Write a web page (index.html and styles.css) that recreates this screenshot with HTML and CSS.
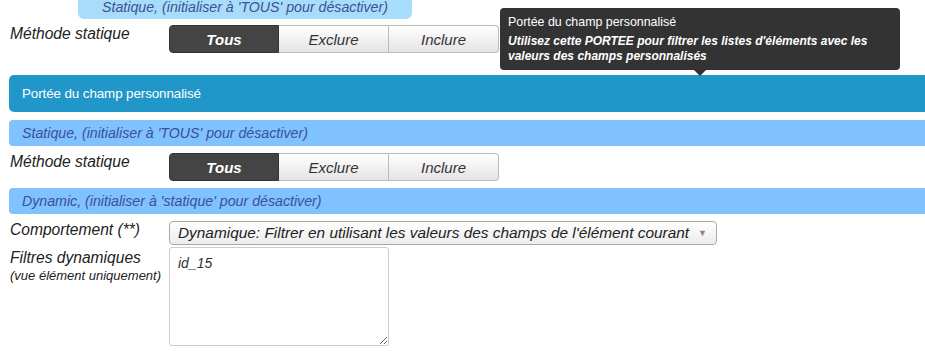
FILE: index.html
```html
<!DOCTYPE html>
<html lang="fr">
  <head>
    <meta charset="UTF-8" />
    <meta name="viewport" content="width=device-width, initial-scale=1.0" />
    <title>Portée du champ personnalisé</title>
    <link rel="stylesheet" href="styles.css">
  </head>

  <body>
    <div class="haut">Statique, (initialiser à 'TOUS' pour désactiver)</div>

    <div class="ligne ligne-boutons">
      <label class="etiquette">Méthode statique</label>
      <div class="groupe">
        <button class="actif">Tous</button>
        <button>Exclure</button>
        <button>Inclure</button>
      </div>
    </div>

    <div class="infobulle">
      <div class="infobulle-titre">Portée du champ personnalisé</div>
      <div class="infobulle-texte">Utilisez cette PORTEE pour filtrer les listes d'éléments avec les valeurs des champs personnalisés</div>
    </div>

    <div class="titre">Portée du champ personnalisé</div>

    <div class="section">Statique, (initialiser à 'TOUS' pour désactiver)</div>

    <div class="ligne ligne-boutons">
      <label class="etiquette">Méthode statique</label>
      <div class="groupe">
        <button class="actif">Tous</button>
        <button>Exclure</button>
        <button>Inclure</button>
      </div>
    </div>

    <div class="section">Dynamic, (initialiser à 'statique' pour désactiver)</div>

    <div class="ligne ligne-select">
      <label class="etiquette">Comportement (**)</label>
      <div class="choix">
        <span>Dynamique: Filtrer en utilisant les valeurs des champs de l'élément courant</span>
        <span class="fleche">▼</span>
      </div>
    </div>

    <div class="ligne ligne-filtres">
      <label class="etiquette">Filtres dynamiques<small>(vue élément uniquement)</small></label>
      <textarea>id_15</textarea>
    </div>
  </body>
</html>
```

FILE: styles.css
```css
html {
  overflow: hidden;
}
body {
  margin: 0;
  font-family: "Liberation Sans", Arial, sans-serif;
  color: #222;
  position: relative;
}
.haut {
  margin-left: 78px;
  width: 334px;
  height: 19px;
  line-height: 14.5px;
  background-color: #a8dcfb;
  border-radius: 0 0 6px 6px;
  text-align: center;
  font-size: 14.2px;
  font-style: italic;
  color: #3d5291;
  white-space: nowrap;
}
.ligne {
  display: flex;
  padding-left: 10px;
}
.etiquette {
  width: 159px;
  flex-shrink: 0;
  font-size: 15.6px;
  font-style: italic;
  line-height: 18px;
  white-space: nowrap;
}
.etiquette small {
  display: block;
  font-size: 13px;
  line-height: 16px;
  margin-top: 1px;
}
.ligne-boutons {
  margin-top: 6px;
}
.groupe {
  display: flex;
}
.groupe button {
  width: 110px;
  height: 28px;
  margin: 0;
  font-family: "Liberation Sans", Arial, sans-serif;
  font-size: 15px;
  font-style: italic;
  color: #333;
  background: linear-gradient(#ffffff, #e4e4e4);
  border: 1px solid #bbb;
  border-left: none;
  padding: 0;
}
.groupe button:first-child {
  border-radius: 4px 0 0 4px;
  border-left: 1px solid #333;
}
.groupe button:last-child {
  border-radius: 0 4px 4px 0;
}
.groupe button.actif {
  background: #444;
  border-color: #333;
  color: #fff;
  font-weight: bold;
}
.titre {
  margin: 22px 0 0 9px;
  height: 37px;
  line-height: 37px;
  padding-left: 13px;
  background-color: #2197c9;
  border-radius: 5px 0 0 5px;
  color: #fff;
  font-size: 13.4px;
  letter-spacing: -0.1px;
}
.section {
  margin: 8px 0 0 9px;
  height: 26px;
  line-height: 26px;
  padding-left: 13px;
  background-color: #80c1ff;
  border-radius: 4px 0 0 4px;
  color: #3b4f9c;
  font-size: 14.2px;
  font-style: italic;
}
.ligne-boutons + .section {
  margin-top: 7px;
}
.titre + .section + .ligne-boutons {
  margin-top: 7px;
}
.ligne-select {
  margin-top: 7px;
}
.choix {
  width: 548px;
  height: 24px;
  box-sizing: border-box;
  display: flex;
  align-items: center;
  justify-content: space-between;
  padding: 0 9px 0 8px;
  border: 1px solid #aaa;
  border-radius: 4px;
  background: linear-gradient(#ffffff, #ececec);
  font-size: 15.4px;
  font-style: italic;
  color: #222;
  white-space: nowrap;
}
.fleche {
  font-size: 9px;
  font-style: normal;
  color: #888;
}
.ligne-filtres {
  margin-top: 2px;
}
.ligne-filtres .etiquette {
  padding-top: 2px;
}
textarea {
  width: 220px;
  height: 99px;
  box-sizing: border-box;
  margin: 0;
  padding: 7px 8px;
  border: 1px solid #ccc;
  border-radius: 3px;
  font-family: "Liberation Sans", Arial, sans-serif;
  font-size: 14px;
  font-style: italic;
  color: #333;
}
.infobulle {
  position: absolute;
  left: 500px;
  top: 8px;
  width: 400px;
  height: 62px;
  box-sizing: border-box;
  padding: 7px 8px 0 8px;
  background-color: #333;
  border-radius: 4px;
  color: #fff;
  font-size: 12px;
  line-height: 15px;
}
.infobulle::after {
  content: "";
  position: absolute;
  left: 194px;
  bottom: -6px;
  border-left: 6px solid transparent;
  border-right: 6px solid transparent;
  border-top: 6px solid #333;
}
.infobulle-titre {
  font-size: 12.4px;
}
.infobulle-texte {
  margin-top: 4px;
  font-weight: bold;
  font-style: italic;
}
```
